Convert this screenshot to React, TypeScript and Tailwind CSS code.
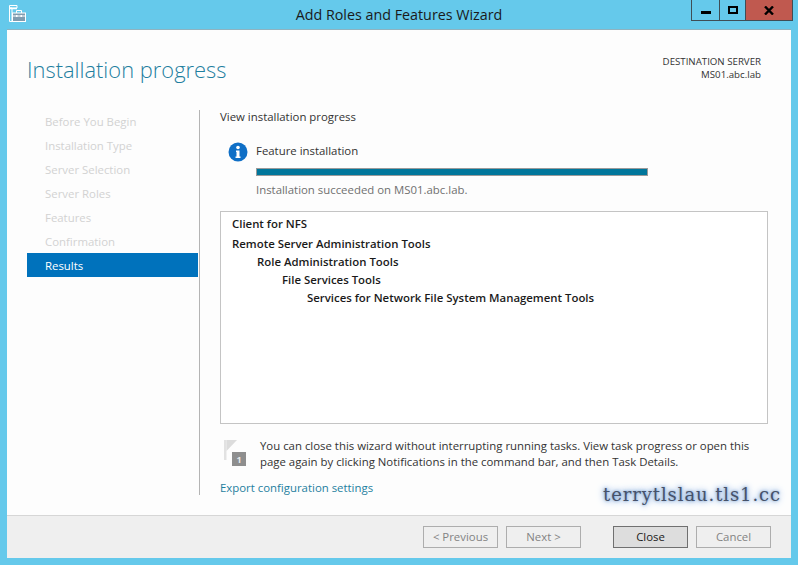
import React from 'react'

const STEPS = ["Before You Begin", "Installation Type", "Server Selection", "Server Roles", "Features", "Confirmation"];

const TREE = [
    { name: "Remote Server Administration Tools", indent: "pl-0" },
    { name: "Role Administration Tools", indent: "pl-[25px]" },
    { name: "File Services Tools", indent: "pl-[50px]" },
    { name: "Services for Network File System Management Tools", indent: "pl-[75px]" },
];

const WizardButton = ({ label, primary = false }: { label: string; primary?: boolean }) => (
    <button
        className={`w-[75px] h-[22px] border text-[11.4px] leading-[20px] ${
            primary
                ? 'bg-[#dddddd] border-[#707070] text-[#1a1a1a]'
                : 'bg-[#efefef] border-[#adadad] text-[#838383]'
        }`}
    >
        {label}
    </button>
);

const App = () => {
    return (
        <div className="w-[798px] h-[565px] flex flex-col overflow-hidden bg-[#65c9eb] font-['Open_Sans','Noto_Sans',sans-serif] text-[11.4px] text-[#333333]">
            {/* Title bar */}
            <div className="h-[29px] shrink-0 grid grid-cols-[1fr_auto_1fr] items-start">
                <svg className="mt-[5px] ml-[9px]" width="17" height="17" viewBox="0 0 17 17">
                    <path d="M0.5 0.5H8V3H0.5ZM0.5 3H3V16.5H0.5Z" fill="#65c9eb" stroke="#fff" strokeWidth="1" />
                    <path d="M0.5 3.5H8" stroke="#fff" strokeWidth="1.5" />
                    <rect x="3.5" y="8" width="13" height="8.5" fill="#7f9cb0" stroke="#fff" />
                    <path d="M7.5 8V5.5H12.5V8" fill="none" stroke="#fff" />
                    <path d="M4 11H16" stroke="#fff" />
                    <path d="M7 10H8.5V12H7ZM11.5 10H13V12H11.5Z" fill="#fff" />
                </svg>
                <div className="text-[14.3px] leading-[20px] pt-[5px] text-[#1a1a1a]">Add Roles and Features Wizard</div>
                <div className="flex justify-end pr-[5px]">
                    <div className="flex h-[21px] border border-t-0 border-[#3f4d55]">
                        <div className="w-[28px] flex items-center justify-center border-r border-[#3f4d55]">
                            <div className="w-[10px] h-[3px] bg-black mt-[5px]" />
                        </div>
                        <div className="w-[26px] flex items-center justify-center border-r border-[#3f4d55]">
                            <div className="w-[10px] h-[8px] border-2 border-black -mt-[1px]" />
                        </div>
                        <div className="w-[46px] flex items-center justify-center bg-[#c0594f]">
                            <svg width="10" height="9" viewBox="0 0 10 9">
                                <path d="M1 0.5L9 8.5M9 0.5L1 8.5" stroke="#000" strokeWidth="2.4" />
                            </svg>
                        </div>
                    </div>
                </div>
            </div>

            {/* Window client area */}
            <div className="mx-[7px] h-[529px] flex flex-col bg-white border-t border-[#8fb3c0]">
                <div className="flex-1 flex flex-col pl-[20px] bg-[#fdfdfd]">
                    {/* Header */}
                    <div className="h-[80px] shrink-0 flex items-start justify-between pr-[30px]">
                        <h1 className="mt-[22px] text-[21.9px] leading-[36px] font-light text-[#1f7f9f]">Installation progress</h1>
                        <div className="mt-[25px] text-right text-[9.7px] leading-[13px] text-[#333333]">
                            <p>DESTINATION SERVER</p>
                            <p>MS01.abc.lab</p>
                        </div>
                    </div>

                    <div className="flex-1 flex">
                        {/* Step list */}
                        <nav className="w-[172px] shrink-0">
                            {STEPS.map((step) => (
                                <div key={step} className="h-[24px] pl-[18px] leading-[24px] text-[#d2d2d2]">{step}</div>
                            ))}
                            <div className="h-[24px] -mt-[1px] pt-[2px] mr-[1px] pl-[18px] leading-[22px] bg-[#0072bc] text-white">Results</div>
                        </nav>

                        {/* Main panel */}
                        <div className="w-[21px] shrink-0 h-[385px] border-l border-[#b4b4b4]" />
                        <div className="w-[548px] flex flex-col">
                            <p className="-mt-[1px] leading-[16px]">View installation progress</p>

                            <div className="flex mt-[18px] pl-[8px]">
                                <svg className="-mt-[1px] shrink-0" width="20" height="20" viewBox="0 0 20 20">
                                    <circle cx="10" cy="10" r="9.5" fill="#0f6fc6" />
                                    <circle cx="10" cy="5.5" r="1.8" fill="#fff" />
                                    <path d="M8 8.5H11.5V14.5H12.5V16H7.5V14.5H8.5V10H8Z" fill="#fff" />
                                </svg>
                                <div className="ml-[8px] w-[392px]">
                                    <p className="leading-[16px]">Feature installation</p>
                                    <div className="mt-[9px] h-[8px] bg-[#00769b] border border-[#9a9a9a]" />
                                    <p className="mt-[6px] leading-[16px] text-[#707070]">Installation succeeded on MS01.abc.lab.</p>
                                </div>
                            </div>

                            <div className="mt-[13px] h-[213px] shrink-0 border border-[#c4c4c4] bg-white pl-[11px] pt-[4px] font-semibold text-[#1a1a1a]">
                                <p className="leading-[16px] mb-[3px]">Client for NFS</p>
                                {TREE.map((row) => (
                                    <p key={row.name} className={`leading-[18px] ${row.indent}`}>{row.name}</p>
                                ))}
                            </div>

                            <div className="flex mt-[15px] pl-[4px]">
                                <svg className="mt-[1px] shrink-0" width="22" height="26" viewBox="0 0 22 26">
                                    <path d="M0 0H2.5V20H0Z" fill="#e2e2e2" />
                                    <path d="M2.5 0H13L2.5 11Z" fill="#dcdcdc" />
                                    <rect x="8" y="12" width="14" height="14" fill="#8e8e8e" />
                                    <text x="15" y="23" fontSize="9" fontWeight="700" textAnchor="middle" fill="#e8e8e8">1</text>
                                </svg>
                                <p className="-mt-[1px] ml-[14px] w-[500px] leading-[16px] text-[#333333]">
                                    You can close this wizard without interrupting running tasks. View task progress or open this page again by clicking Notifications in the command bar, and then Task Details.
                                </p>
                            </div>

                            <div className="flex mt-[10px] items-start justify-between">
                                <a className="leading-[16px] text-[#1f7f9f]">Export configuration settings</a>
                                <span className="mt-[6px] -mr-[13px] font-['DejaVu_Serif',serif] text-[18px] tracking-[0.9px] leading-[18px] text-[#46526a] [text-shadow:0_0_3px_#6f9ad0,0_0_6px_#8fb2e0,0_0_8px_#a8c4e8]">terrytlslau.tls1.cc</span>
                            </div>
                        </div>
                    </div>
                </div>

                {/* Footer */}
                <div className="h-[43px] shrink-0 bg-[#efefef] border-t border-[#d6d6d6] flex items-start justify-end pt-[10px] pr-[20px]">
                    <div className="flex gap-[8px] mr-[32px]">
                        <WizardButton label="< Previous" />
                        <WizardButton label="Next >" />
                    </div>
                    <div className="flex gap-[8px]">
                        <WizardButton label="Close" primary />
                        <WizardButton label="Cancel" />
                    </div>
                </div>
            </div>
        </div>
    )
}

export default App;
